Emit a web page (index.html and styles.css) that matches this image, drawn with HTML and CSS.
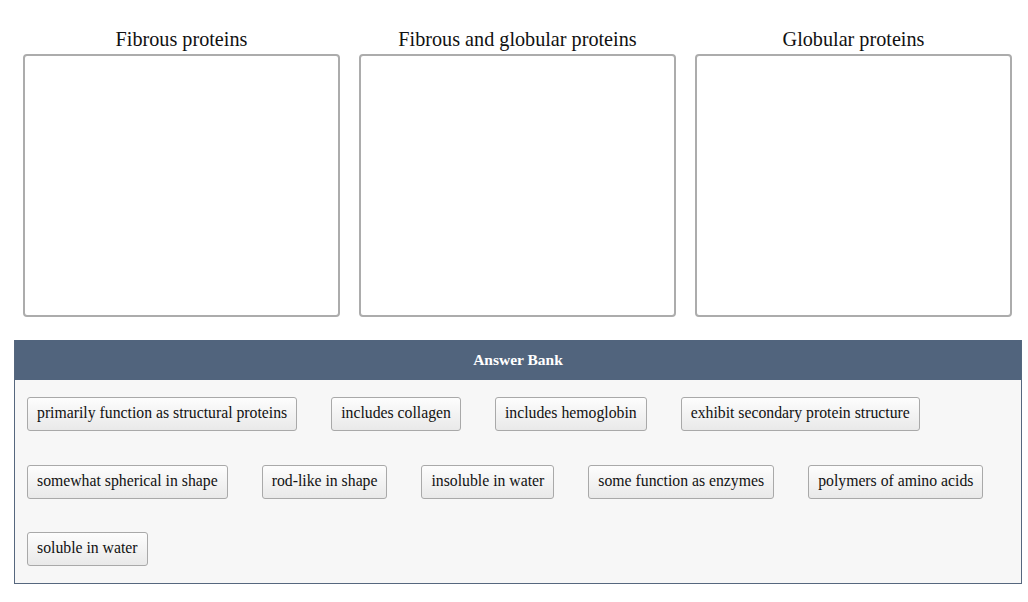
FILE: index.html
```html
<!DOCTYPE html>
<html>
<head>
<meta charset="utf-8">
<link rel="stylesheet" href="styles.css">
</head>
<body>
<div class="page">
  <div class="columns">
    <div class="col">
      <div class="col-title">Fibrous proteins</div>
      <div class="drop"></div>
    </div>
    <div class="col">
      <div class="col-title">Fibrous and globular proteins</div>
      <div class="drop"></div>
    </div>
    <div class="col">
      <div class="col-title">Globular proteins</div>
      <div class="drop"></div>
    </div>
  </div>
  <div class="bank">
    <div class="bank-head">Answer Bank</div>
    <div class="bank-body">
      <span class="chip">primarily function as structural proteins</span>
      <span class="chip">includes collagen</span>
      <span class="chip">includes hemoglobin</span>
      <span class="chip">exhibit secondary protein structure</span>
      <span class="chip">somewhat spherical in shape</span>
      <span class="chip">rod-like in shape</span>
      <span class="chip">insoluble in water</span>
      <span class="chip">some function as enzymes</span>
      <span class="chip">polymers of amino acids</span>
      <span class="chip">soluble in water</span>
    </div>
  </div>
</div>
</body>
</html>
```

FILE: styles.css
```css
html, body {
  margin: 0;
  padding: 0;
  background: #ffffff;
}
body {
  font-family: "Liberation Serif", "Times New Roman", serif;
  color: #111;
}
.page {
  padding-top: 28px;
}
.columns {
  display: flex;
  gap: 19px;
  padding-left: 23px;
}
.col {
  width: 317px;
  display: flex;
  flex-direction: column;
}
.col-title {
  font-size: 20.2px;
  line-height: 23px;
  text-align: center;
  margin-bottom: 3px;
  color: #111;
}
.drop {
  height: 263px;
  box-sizing: border-box;
  border: 2px solid #acacac;
  border-radius: 4px;
  background: #fff;
}
.bank {
  margin: 23px 0 0 14px;
  width: 1008px;
  box-sizing: border-box;
  border: 1px solid #56677e;
  border-top: none;
}
.bank-head {
  height: 40px;
  line-height: 40px;
  background: #51647d;
  color: #fff;
  font-weight: bold;
  font-size: 15.5px;
  text-align: center;
}
.bank-body {
  background: #f7f7f7;
  padding: 17px 12px 17px 12px;
  display: flex;
  flex-wrap: wrap;
  column-gap: 34px;
  row-gap: 33.5px;
}
.chip {
  display: inline-block;
  font-size: 15.75px;
  line-height: 20px;
  padding: 5px 9px 7px 9px;
  border: 1px solid #a9a9a9;
  border-radius: 3px;
  background: linear-gradient(#fdfdfd, #e9e9e9);
  color: #111;
  white-space: nowrap;
}
```
